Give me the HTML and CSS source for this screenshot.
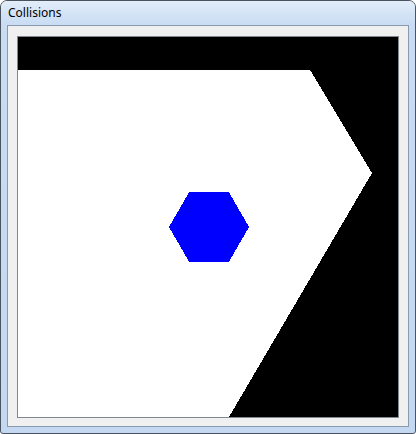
FILE: index.html
```html
<!DOCTYPE html>
<html>
<head>
<meta charset="utf-8">
<link rel="stylesheet" href="styles.css">
</head>
<body>
<div class="window">
  <div class="titlebar"><span class="title">Collisions</span></div>
  <div class="client">
    <div class="panel">
      <svg class="canvas" width="380" height="380" viewBox="0 0 380 380" shape-rendering="crispEdges">
        <rect x="0" y="0" width="380" height="380" fill="#000"/>
        <polygon points="0,33 292,33 354,136 211,380 0,380" fill="#fff"/>
        <polygon points="231,190 211,224.64 171,224.64 151,190 171,155.36 211,155.36" fill="#0000ff"/>
      </svg>
    </div>
  </div>
</div>
</body>
</html>
```

FILE: styles.css
```css
html, body {
  margin: 0;
  padding: 0;
  background: #ffffff;
}

.window {
  width: 416px;
  height: 434px;
  box-sizing: border-box;
  border: 1px solid #4a5461;
  border-radius: 7px 7px 3px 3px;
  background: linear-gradient(to bottom, #dbe8f7 0px, #c9dcf3 24px, #c4d8f1 100%);
  display: flex;
  flex-direction: column;
  overflow: hidden;
}

.titlebar {
  height: 24px;
  flex: none;
  display: flex;
  align-items: center;
  padding-left: 7px;
  box-sizing: border-box;
  background: linear-gradient(to bottom, #e3edf9 0%, #d4e4f6 50%, #c9dcf3 100%);
}

.title {
  font-family: "Noto Sans", "DejaVu Sans", sans-serif;
  font-size: 12px;
  color: #000000;
  line-height: 1;
  margin-top: -1px;
}

.client {
  margin: 0 6px;
  height: 402px;
  box-sizing: border-box;
  border: 1px solid #8a9bb0;
  background: #f0f0f0;
  padding: 10px 9px 8px 9px;
  flex: none;
}

.panel {
  width: 380px;
  height: 380px;
  border: 1px solid #828790;
}

.canvas {
  display: block;
}
```
